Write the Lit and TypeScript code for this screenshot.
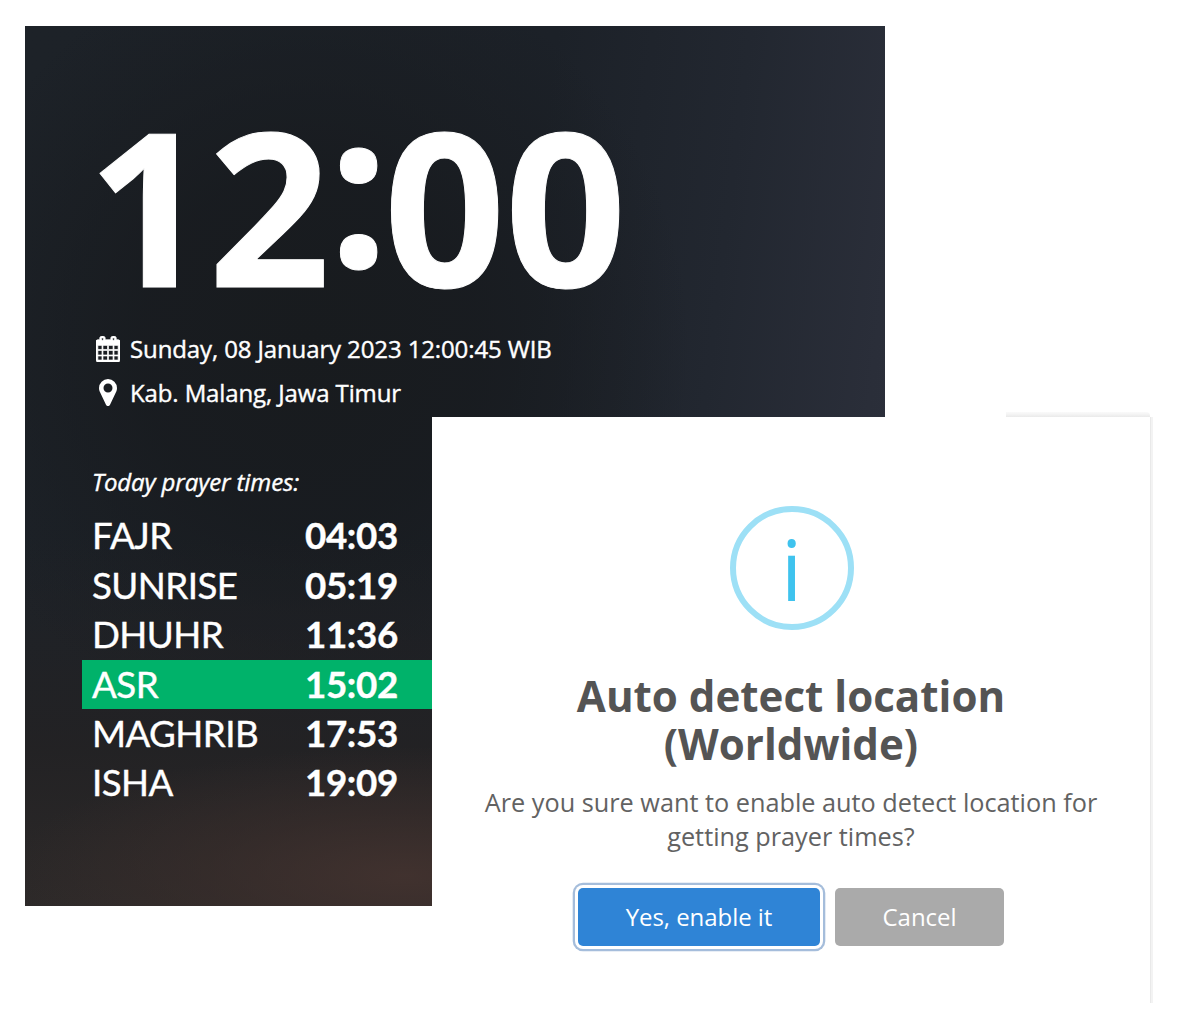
import { LitElement, html, css } from "lit";
import { customElement, property } from "lit/decorators.js";

interface Prayer {
  name: string;
  time: string;
  active?: boolean;
}

const PRAYERS: Prayer[] = [
  { name: "FAJR", time: "04:03" },
  { name: "SUNRISE", time: "05:19" },
  { name: "DHUHR", time: "11:36" },
  { name: "ASR", time: "15:02", active: true },
  { name: "MAGHRIB", time: "17:53" },
  { name: "ISHA", time: "19:09" },
];

@customElement("prayer-clock")
export class PrayerClock extends LitElement {
  @property({ attribute: false }) prayers: Prayer[] = [];

  static styles = css`
    :host {
      display: flex;
      flex-direction: column;
      box-sizing: border-box;
      width: 860px;
      height: 880px;
      padding: 78px 0 0 57px;
      color: #fff;
      font-family: "Open Sans", sans-serif;
      background:
        radial-gradient(ellipse 400px 130px at 380px 850px, rgba(70, 52, 48, 0.8), rgba(62, 47, 44, 0.5) 50%, rgba(40, 35, 35, 0) 100%),
        linear-gradient(180deg, rgba(36, 34, 34, 0) 58%, rgba(36, 34, 35, 0.8) 82%, rgba(46, 42, 41, 0.9) 100%),
        radial-gradient(ellipse 380px 400px at 285px 320px, #181b1e 0%, rgba(24, 27, 31, 0.85) 45%, rgba(26, 30, 37, 0) 100%),
        linear-gradient(97deg, #1d2228 0%, #1c2128 55%, #222730 75%, #2a2e39 92%, #2d313c 100%);
    }
    .clock {
      display: flex;
      height: 200px;
      padding-left: 5.5px;
      font-size: 213px;
      line-height: 200px;
      font-weight: 700;
      letter-spacing: -0.8px;
      -webkit-text-stroke: 1px #fff;
    }
    .colon {
      margin: -20px -4.5px 0 -1.2px;
    }
    .line {
      display: flex;
      align-items: center;
      height: 44px;
      padding-left: 14px;
      font-size: 24px;
      letter-spacing: -0.12px;
      -webkit-text-stroke: 0.4px #fff;
    }
    .lines {
      margin-top: 22px;
    }
    .icon {
      display: flex;
      justify-content: center;
      width: 24px;
      margin: 1px 10px 0 0;
      fill: #fff;
    }
    .calendar {
      stroke: #fff;
      stroke-width: 50px;
    }
    .caption {
      margin: 51px 0 0 10px;
      height: 34px;
      font-size: 24px;
      line-height: 34px;
      letter-spacing: -0.1px;
      font-style: italic;
      -webkit-text-stroke: 0.4px #fff;
    }
    .times {
      display: flex;
      flex-direction: column;
      margin-top: 12.7px;
      font-family: Lato, sans-serif;
      font-size: 36.7px;
    }
    .row {
      display: grid;
      grid-template-columns: 213px 1fr;
      align-items: center;
      height: 49.4px;
      padding-left: 10px;
      line-height: 46px;
    }
    .row span {
      padding-bottom: 2px;
    }
    .active {
      background: #00b26a;
    }
    .name {
      letter-spacing: -0.55px;
      -webkit-text-stroke: 0.4px #fff;
    }
    .time {
      font-weight: 700;
      letter-spacing: -0.35px;
      -webkit-text-stroke: 0.4px #fff;
    }
  `;

  render() {
    return html`
      <div class="clock"><span>12</span><span class="colon">:</span><span>00</span></div>
      <div class="lines">
        <div class="line">
          <span class="icon">
            <svg class="calendar" width="24" height="26" viewBox="0 0 1664 1792">
              <path d="M128 1664h288v-288h-288v288zm352 0h320v-288h-320v288zm-352-352h288v-320h-288v320zm352 0h320v-320h-320v320zm-352-384h288v-288h-288v288zm736 736h320v-288h-320v288zm-384-736h320v-288h-320v288zm768 736h288v-288h-288v288zm-384-352h320v-320h-320v320zm-352-864v-288q0-13-9.5-22.5t-22.5-9.5h-64q-13 0-22.5 9.5t-9.5 22.5v288q0 13 9.5 22.5t22.5 9.5h64q13 0 22.5-9.5t9.5-22.5zm736 864h288v-320h-288v320zm-384-384h320v-288h-320v288zm384 0h288v-288h-288v288zm32-480v-288q0-13-9.5-22.5t-22.5-9.5h-64q-13 0-22.5 9.5t-9.5 22.5v288q0 13 9.5 22.5t22.5 9.5h64q13 0 22.5-9.5t9.5-22.5zm384-64v1280q0 52-38 90t-90 38h-1408q-52 0-90-38t-38-90v-1280q0-52 38-90t90-38h128v-96q0-66 47-113t113-47h64q66 0 113 47t47 113v96h384v-96q0-66 47-113t113-47h64q66 0 113 47t47 113v96h128q52 0 90 38t38 90z"/>
              <path d="M40 300h1584v310h-1584z"/>
            </svg>
          </span>
          <span>Sunday, 08 January 2023 12:00:45 WIB</span>
        </div>
        <div class="line">
          <span class="icon">
            <svg width="18" height="27" viewBox="0 128 1024 1536">
              <path d="M768 640q0-106-75-181t-181-75-181 75-75 181 75 181 181 75 181-75 75-181zm256 0q0 109-33 179l-364 774q-16 33-47.500 52t-67.500 19-67.500-19-46.500-52l-365-774q-33-70-33-179 0-212 150-362t362-150 362 150 150 362z"/>
            </svg>
          </span>
          <span>Kab. Malang, Jawa Timur</span>
        </div>
      </div>
      <div class="caption">Today prayer times:</div>
      <div class="times">
        ${this.prayers.map(
          (p) => html`<div class="row ${p.active ? "active" : ""}">
            <span class="name">${p.name}</span><span class="time">${p.time}</span>
          </div>`
        )}
      </div>
    `;
  }
}

@customElement("location-dialog")
export class LocationDialog extends LitElement {
  static styles = css`
    :host {
      display: flex;
      flex-direction: column;
      align-items: center;
      box-sizing: border-box;
      width: 718px;
      height: 586px;
      padding-top: 89px;
      background: #fff;
      font-family: "Open Sans", sans-serif;
      text-align: center;
    }
    .badge {
      display: flex;
      justify-content: center;
      box-sizing: border-box;
      width: 124px;
      height: 124px;
      margin-left: 1px;
      border: 6px solid #9de0f6;
      border-radius: 50%;
      color: #3fc3ee;
      font-size: 84px;
      line-height: 114px;
    }
    h2 {
      margin: 42px 0 0;
      color: #545454;
      font-size: 42.1px;
      line-height: 48px;
      font-weight: 700;
    }
    p {
      margin: 18px 0 0;
      color: #626262;
      font-size: 25.27px;
      line-height: 33.6px;
    }
    .actions {
      display: flex;
      gap: 15px;
      margin-top: 35.3px;
    }
    button {
      height: 58px;
      padding: 0;
      border: 0;
      border-radius: 5px;
      color: #fff;
      font-family: inherit;
      font-size: 24px;
      line-height: 58px;
      letter-spacing: -0.05px;
    }
    .confirm {
      width: 242px;
      background: #2f84d6;
      box-shadow: 0 0 0 3px #fff, 0 0 0 5.3px #a5bddb;
    }
    .cancel {
      width: 169px;
      background: #aaa;
    }
  `;

  render() {
    return html`
      <div class="badge">i</div>
      <h2>Auto detect location<br />(Worldwide)</h2>
      <p>Are you sure want to enable auto detect location for<br />getting prayer times?</p>
      <div class="actions">
        <button class="confirm">Yes, enable it</button>
        <button class="cancel">Cancel</button>
      </div>
    `;
  }
}

@customElement("app-root")
export class AppRoot extends LitElement {
  static styles = css`
    :host {
      display: block;
      position: relative;
      box-sizing: border-box;
      width: 1187px;
      height: 1033px;
      padding: 26px 0 0 25px;
      overflow: hidden;
      background: #fff;
    }
    .overlay {
      position: absolute;
      left: 432px;
      top: 412px;
      display: grid;
      grid-template-columns: 718px 3px;
      grid-template-rows: 5px 586px;
    }
    .top-edge {
      justify-self: end;
      width: 144px;
      border-top-right-radius: 4px;
      background: linear-gradient(#fafafa, #f3f3f3 50%, #eaeaea);
    }
    .side-edge {
      grid-column: 2;
      grid-row: 2;
      background: linear-gradient(90deg, #e9e9e9 33%, #f3f3f3 34%);
    }
    location-dialog {
      grid-column: 1;
      grid-row: 2;
    }
  `;

  render() {
    return html`
      <prayer-clock .prayers=${PRAYERS}></prayer-clock>
      <div class="overlay">
        <div class="top-edge"></div>
        <location-dialog></location-dialog>
        <div class="side-edge"></div>
      </div>
    `;
  }
}
